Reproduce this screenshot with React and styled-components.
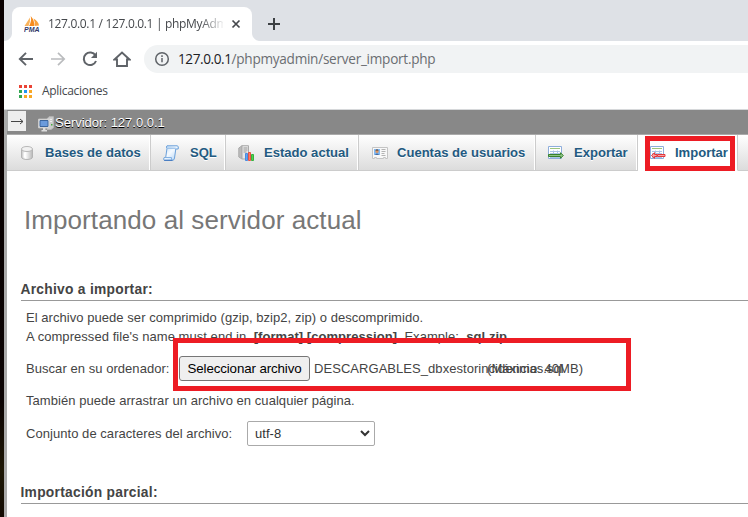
import React from 'react';
import styled, { createGlobalStyle } from 'styled-components';

const GlobalStyle = createGlobalStyle`
  * { box-sizing: border-box; }
  body {
    margin: 0;
    background: #fff;
    overflow: hidden;
    font-family: "Liberation Sans", Arial, sans-serif;
  }
`;

const Desktop = styled.div`
  position: relative;
  width: 748px;
  height: 517px;
  padding-left: 4px;
  overflow: hidden;
  background: linear-gradient(#080000 0, #0a0202 400px, #1d1604 470px, #120a02 517px);
`;

const BrowserWindow = styled.div`
  display: flex;
  flex-direction: column;
  height: 517px;
  background: #fff;
`;

const TabStrip = styled.div`
  display: flex;
  align-items: flex-end;
  flex: none;
  height: 41px;
  padding-left: 8px;
  background: #dee1e6;
`;

const BrowserTab = styled.div`
  display: flex;
  align-items: center;
  width: 240px;
  height: 34px;
  padding-left: 12px;
  border-radius: 8px 8px 0 0;
  background: #fff;
  svg { flex: none; display: block; }
`;

const TabFoot = styled.div`
  width: 8px;
  height: 8px;
  flex: none;
  margin-left: ${(p) => (p.$left ? '-8px' : '0')};
  background: radial-gradient(circle at ${(p) => (p.$left ? '0 0' : '8px 0')}, #dee1e6 7.5px, #fff 8.5px);
`;

const TabTitle = styled.span`
  width: 175px;
  margin-left: 8px;
  overflow: hidden;
  white-space: nowrap;
  font: 12px/18px "Open Sans", "Noto Sans", sans-serif;
  letter-spacing: -0.32px;
  color: #45484c;
  mask-image: linear-gradient(90deg, #000 152px, transparent 177px);
`;

const CloseIcon = styled.svg`
  margin-left: 8px;
`;

const NewTabIcon = styled.svg`
  align-self: center;
  margin: 7px 0 0 7px;
`;

const Toolbar = styled.div`
  display: flex;
  align-items: center;
  flex: none;
  height: 36px;
  padding-left: 14px;
  svg { display: block; flex: none; }
`;

const NavIcon = styled.svg`
  margin-right: ${(p) => p.$gap || 16}px;
`;

const AddressBar = styled.div`
  display: flex;
  align-items: center;
  flex: 1;
  height: 28px;
  margin-left: -3px;
  padding-left: 10px;
  border-radius: 14px 0 0 14px;
  background: #f1f3f4;
`;

const Url = styled.span`
  margin-left: 8px;
  white-space: nowrap;
  font: 13.6px/20px "Open Sans", "Noto Sans", sans-serif;
  letter-spacing: -0.27px;
  color: #6b6e72;
  b { font-weight: 400; color: #202124; letter-spacing: -0.42px; }
`;

const BookmarksBar = styled.div`
  display: flex;
  align-items: center;
  flex: none;
  height: 33px;
  padding: 0 0 4px 15px;
  border-bottom: 1px solid #d6d8da;
  font: 12px/18px "Open Sans", "Noto Sans", sans-serif;
  letter-spacing: -0.3px;
  color: #45484c;
`;

const AppsGrid = styled.svg`
  margin-right: 10px;
`;

const Page = styled.div`
  display: flex;
  flex-direction: column;
  flex: 1;
  border-left: 3px solid #aaa;
`;

const ServerInfo = styled.div`
  display: flex;
  align-items: center;
  flex: none;
  height: 25px;
  background: #888;
  border-bottom: 1px solid #aaa;
  font-size: 13px;
  color: #fff;
  text-shadow: 0 1px 0 #000;
`;

const ServerGlyph = styled.svg`
  margin-top: 3px;
`;

const Collapse = styled.div`
  display: grid;
  place-items: center;
  width: 19px;
  height: 20px;
  margin: 0 12px 2px 0;
  border-left: 1px solid #aaa;
  background: #eee;
`;

const ServerName = styled.span`
  margin: 2px 0 0 1px;
  line-height: 16px;
`;

const Menu = styled.div`
  display: flex;
  flex: none;
  height: 36px;
  overflow: hidden;
`;

const MenuItem = styled.div`
  display: flex;
  align-items: center;
  flex: none;
  width: ${(p) => p.$width}px;
  padding-left: ${(p) => p.$pad}px;
  border-right: 1px solid #ccc;
  border-bottom: 1px solid ${(p) => (p.$active ? '#fff' : '#ccc')};
  background: ${(p) => (p.$active ? '#fff' : 'linear-gradient(#fff, #dcdcdc)')};
  box-shadow: inset -1px 0 #fff;
  font-size: 13.05px;
  font-weight: 700;
  white-space: nowrap;
  color: #235a81;
  text-shadow: 0 1px 0 #fff;
  svg { flex: none; margin-right: ${(p) => p.$gap || 9}px; }
`;

const Content = styled.main`
  padding: 36px 0 0 14px;
  font-size: 13px;
  color: #444;
  white-space: nowrap;
`;

const Title = styled.h2`
  margin: 0 0 47px 3px;
  font-size: 26px;
  line-height: 26px;
  font-weight: 400;
  letter-spacing: 0.08px;
  color: #777;
`;

const SectionTitle = styled.h3`
  height: 21px;
  margin: 0 0 0 -0.5px;
  border-bottom: 1px solid #999;
  font-size: 13.8px;
  line-height: 19px;
  font-weight: 700;
  letter-spacing: 0.27px;
`;

const Line = styled.div`
  display: flex;
  align-items: center;
  height: ${(p) => p.$height}px;
  margin-top: ${(p) => p.$top || 0}px;
  padding-left: 5px;
  letter-spacing: 0.05px;
  white-space: pre;
`;

const FileInput = styled.div`
  display: flex;
  align-items: center;
  width: 308px;
`;

const FieldLabel = styled.span`
  flex: none;
  width: ${(p) => p.$width}px;
`;

const FileButton = styled.button`
  flex: none;
  width: 131px;
  height: 25px;
  margin-right: 4px;
  padding: 0;
  border: 1px solid #767676;
  border-radius: 3px;
  background: #efefef;
  font: 13.33px "Liberation Sans", Arial, sans-serif;
  letter-spacing: -0.12px;
  color: #000;
`;

const Select = styled.div`
  display: flex;
  align-items: center;
  justify-content: space-between;
  width: 128px;
  height: 25px;
  padding: 0 4px 0 7px;
  border: 1px solid #aaa;
  border-radius: 2px;
  background: #fff;
  font-size: 13px;
  color: #333;
`;

const Marker = styled.div`
  position: absolute;
  left: ${(p) => p.$x}px;
  top: ${(p) => p.$y}px;
  width: ${(p) => p.$w}px;
  height: ${(p) => p.$h}px;
  border: 5px solid #ed1c24;
`;

const Favicon = () => (
  <svg width="16" height="16" viewBox="0 0 16 16">
    <path d="M.5 10 6 1.500Q6.500 6 4.500 10Z" fill="#f9b25a" />
    <path d="M5 10Q8 5 6.700 0Q11 5 10 10Z" fill="#f68b1f" />
    <path d="M10.500 10Q11.500 6 9.500 2.500Q14.500 5.500 15 9.500Z" fill="#f8a03c" />
    <text x="0" y="15.500" fontFamily="Liberation Sans" fontSize="6.300" fontWeight="700" fontStyle="italic" textLength="15.500" lengthAdjust="spacingAndGlyphs" fill="#34396a">PMA</text>
  </svg>
);

const DatabaseIcon = () => (
  <svg width="16" height="16" viewBox="0 0 16 16">
    <defs>
      <linearGradient id="cyl">
        <stop stopColor="#c4c4c4" />
        <stop offset=".35" stopColor="#fff" />
        <stop offset="1" stopColor="#b8b8b8" />
      </linearGradient>
    </defs>
    <path d="M2.500 4v8c0 3.300 11 3.300 11 0V4" fill="url(#cyl)" stroke="#b4b4b4" />
    <ellipse cx="8" cy="4" rx="5.500" ry="2.500" fill="#f1f1f1" stroke="#b8b8b8" />
    <path d="M5.500 7.500v5" stroke="#fff" strokeWidth="1.500" />
  </svg>
);

const SqlIcon = () => (
  <svg width="16" height="16" viewBox="0 0 16 16">
    <defs>
      <linearGradient id="scroll" x2="1" y2="1">
        <stop stopColor="#b4d6f7" />
        <stop offset=".45" stopColor="#f5faff" />
        <stop offset="1" stopColor="#a9cff5" />
      </linearGradient>
    </defs>
    <path d="M4 .8h10.500q1.300.8.700 3.200h-2.400l-1.300 9q-.2 2.300-2 2.300H1.200q-1.200-1 0-2.800h1.500L4 3.200q-1.300-1.200 0-2.400Z" fill="url(#scroll)" stroke="#6ba0da" />
    <path d="M4.500 3.200h8.300M2.700 12.500h5.800q-.5 1.800 1 2.800" fill="none" stroke="#86b3e3" />
    <path d="M1.200 15.300h8.300" stroke="#3d72bc" />
  </svg>
);

const StatusIcon = () => (
  <svg width="17" height="16" viewBox="0 0 17 16">
    <path d="M.8 3 4 .7V14L.8 12Z" fill="#bbb" stroke="#aaa" />
    <path d="M4 .7h6.500V14H4Z" fill="#e6e6e6" stroke="#aaa" />
    <path d="M5.500 3h4M5.500 5h4M5.500 7h3" stroke="#999" />
    <path d="M7.500 8.500h2v7h-2Z" fill="#64a4ee" stroke="#478be0" />
    <path d="M10.500 7.500h2v8h-2Z" fill="#ff7a64" stroke="#e95345" />
    <path d="M13.500 9.500h2v6h-2Z" fill="#4fce53" stroke="#36b33d" />
  </svg>
);

const UsersIcon = () => (
  <svg width="16" height="16" viewBox="0 0 16 16">
    <path d="M.5 2.500h15v11h-2v-1h-2v1h-7v-1h-2v1h-2Z" fill="#f8f8f8" stroke="#c4c4c4" />
    <path d="M2 4h6v6H2Z" fill="#82b9f2" />
    <circle cx="5" cy="6.500" r="1.600" fill="#d99563" />
    <path d="M3.500 6q0-1.800 1.500-1.800T6.500 6Q5 5 3.500 6Z" fill="#70482b" />
    <path d="M3 10q2-2.800 4 0Z" fill="#466b9e" />
    <path d="M9.500 4.500h4M9.500 6.500h4M9.500 8.500h3M9.500 10.500h4" stroke="#b4b4b4" />
  </svg>
);

const TransferIcon = ({ incoming }) => (
  <svg width="16" height="16" viewBox="0 0 16 16">
    <path d="M.5 1.500h13v12H.5Z" fill="#fff" stroke="#8eaedc" />
    <path d="M2 3.500h10" stroke="#9cc47e" />
    <path d="M2 6.500h10M2 8.500h10M2 12.500h10M5.500 5.500v7M9.500 5.500v7" stroke="#a9c3e6" />
    {incoming ? (
      <path d="M1.500 10.500 4.500 7.700v1.800h2.500v2H4.500v1.800ZM7.500 9.500h7.500v2H7.500Z" fill="#f9a3a3" stroke="#e2373d" />
    ) : (
      <path d="M15.300 10.500 12.500 7.700v1.800H.5v2h12v1.800Z" fill="#8cc282" stroke="#37802f" />
    )}
  </svg>
);

const ServerIcon = () => (
  <ServerGlyph width="16" height="16" viewBox="0 0 16 16">
    <path d="M9 3 11 .7h4.500v11L13 13.500H9Z" fill="#ccc" stroke="#b4b4b4" />
    <path d="M11 3.500h3M11 5.500h3" stroke="#eee" />
    <path d="M13 8h1.500v1.500H13Z" fill="#43ab3a" />
    <path d="M.6 3.200h10.800v8.600H.6Z" fill="#e8e8e8" stroke="#d0d0d0" />
    <path d="M2 4.500h8v6H2Z" fill="#6b9bdc" stroke="#3b659d" />
    <path d="M5 12h2.500v2H9v1.500H3.500V14H5Z" fill="#ddd" />
  </ServerGlyph>
);

const APP_COLORS = ['#ea4335', '#ea4335', '#ea4335', '#34a853', '#2196f3', '#f9a825', '#34a853', '#f9a825', '#f9a825'];

const MENU = [
  { label: 'Bases de datos', icon: <DatabaseIcon />, width: 144, pad: 12, gap: 10 },
  { label: 'SQL', icon: <SqlIcon />, width: 75, pad: 12, gap: 11 },
  { label: 'Estado actual', icon: <StatusIcon />, width: 133, pad: 12, gap: 9 },
  { label: 'Cuentas de usuarios', icon: <UsersIcon />, width: 177, pad: 13, gap: 9 },
  { label: 'Exportar', icon: <TransferIcon />, width: 102, pad: 12, gap: 10 },
  { label: 'Importar', icon: <TransferIcon incoming />, width: 100, pad: 12, gap: 9, active: true },
  { label: '', icon: null, width: 20, pad: 12 },
];

export default function App() {
  return (
    <Desktop>
      <GlobalStyle />
      <BrowserWindow>
        <TabStrip>
          <TabFoot $left />
          <BrowserTab>
            <Favicon />
            <TabTitle>127.0.0.1 / 127.0.0.1 | phpMyAdmin</TabTitle>
            <CloseIcon width="10" height="10" viewBox="0 0 10 10" fill="none" stroke="#45484c" strokeWidth="1.700">
              <path d="m1.500 1.500 7 7m0-7-7 7" />
            </CloseIcon>
          </BrowserTab>
          <TabFoot />
          <NewTabIcon width="14" height="14" viewBox="0 0 14 14" stroke="#3c4043" strokeWidth="2">
            <path d="M7 1v12M1 7h12" />
          </NewTabIcon>
        </TabStrip>
        <Toolbar>
          <NavIcon width="16" height="16" viewBox="0 0 16 16" fill="none" stroke="#5f6368" strokeWidth="1.900">
            <path d="M15 8H2.500M8 1.800 1.800 8 8 14.200" />
          </NavIcon>
          <NavIcon width="16" height="16" viewBox="0 0 16 16" fill="none" stroke="#babcbe" strokeWidth="1.700">
            <path d="M1 8h12.500M8 1.800 14.200 8 8 14.200" />
          </NavIcon>
          <NavIcon $gap={15} width="16" height="16" viewBox="0 0 16 16" fill="none" stroke="#5f6368" strokeWidth="2">
            <path d="M13.500 4.500A6.300 6.300 0 1 0 14 10" />
            <path d="M15 .8V7H9Z" fill="#5f6368" stroke="none" />
          </NavIcon>
          <NavIcon width="18" height="16" viewBox="0 0 18 16" fill="none" stroke="#5f6368" strokeWidth="1.900">
            <path d="M1.500 8.500 9 1.500l7.500 7H14V15H4V8.500Z" />
          </NavIcon>
          <AddressBar>
            <svg width="16" height="16" viewBox="0 0 16 16" fill="none" stroke="#5f6368" strokeWidth="1.500">
              <circle cx="8" cy="8" r="6.300" />
              <path d="M8 7v4.300M8 4.300v1.600" />
            </svg>
            <Url><b>127.0.0.1</b>/phpmyadmin/server_import.php</Url>
          </AddressBar>
        </Toolbar>
        <BookmarksBar>
          <AppsGrid width="13" height="13" viewBox="0 0 13 13">
            {APP_COLORS.map((c, i) => (
              <rect key={i} x={(i % 3) * 5} y={Math.floor(i / 3) * 5} width="3" height="3" fill={c} />
            ))}
          </AppsGrid>
          Aplicaciones
        </BookmarksBar>
        <Page>
          <ServerInfo>
            <Collapse>
              <svg width="13" height="8" viewBox="0 0 13 8" fill="none" stroke="#444">
                <path d="M0 4.500h12M9 2l3 2.500L9 7" />
              </svg>
            </Collapse>
            <ServerIcon />
            <ServerName>Servidor: 127.0.0.1</ServerName>
          </ServerInfo>
          <Menu>
            {MENU.map((m, i) => (
              <MenuItem key={i} $width={m.width} $pad={m.pad} $gap={m.gap} $active={m.active}>
                {m.icon}
                {m.label}
              </MenuItem>
            ))}
          </Menu>
          <Content>
            <Title>Importando al servidor actual</Title>
            <SectionTitle>Archivo a importar:</SectionTitle>
            <Line $height={19} $top={7}>El archivo puede ser comprimido (gzip, bzip2, zip) o descomprimido.</Line>
            <Line $height={19}>A compressed file's name must end in <b>.[format].[compression]</b>. Example: <b>.sql.zip</b></Line>
            <Line $height={26} $top={9}>
              <FieldLabel $width={153}>Buscar en su ordenador:</FieldLabel>
              <FileInput>
                <FileButton>Seleccionar archivo</FileButton>
                <span>DESCARGABLES_dbxestorincidencias.sql</span>
              </FileInput>
              (Máximo: 40MB)
            </Line>
            <Line $height={18} $top={10}>También puede arrastrar un archivo en cualquier página.</Line>
            <Line $height={26} $top={11}>
              <FieldLabel $width={221}>Conjunto de caracteres del archivo:</FieldLabel>
              <Select>
                utf-8
                <svg width="10" height="7" viewBox="0 0 10 7" fill="none" stroke="#333" strokeWidth="2">
                  <path d="m1 1 4 4 4-4" />
                </svg>
              </Select>
            </Line>
            <Line $height={37} />
            <SectionTitle>Importación parcial:</SectionTitle>
          </Content>
        </Page>
      </BrowserWindow>
      <Marker $x={645} $y={136} $w={90} $h={35} />
      <Marker $x={173} $y={338} $w={458} $h={53} />
    </Desktop>
  );
}
